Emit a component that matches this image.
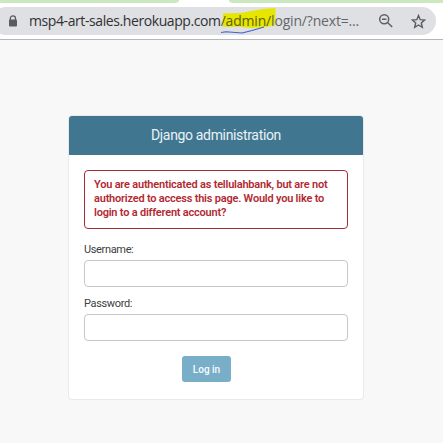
<main class="screen">
  <header class="browser">
    <div class="tabs"><span class="left"></span><span class="right"></span></div>
    <div class="address">
      <svg class="lock" width="10" height="13" viewBox="0 0 10 13">
        <path d="M2.3 5V3.5a2.6 2.6 0 0 1 5.2 0V5" fill="none" stroke="#5a5b5e" stroke-width="1.3" />
        <rect x="1" y="4.6" width="8" height="7" rx="1" fill="#5a5b5e" />
      </svg>
      <div class="url">
        <svg class="marker" width="60" height="32" viewBox="220 6 60 32">
          <path d="M223 13.5 240 13 263 9 275.5 8V25L266 27 251 28 238 26.5 223 27Z" fill="#e6e600" />
          <path d="M221 32.5 226 31.8 242 33 252 30.5 264 27" fill="none" stroke="#3f62c9" stroke-width="1.1" />
        </svg>
        <span class="host">msp4-art-sales.herokuapp.com</span><span class="path"><span class="marked">/admin/</span>login/?next=...</span>
      </div>
      <svg class="zoom" width="16" height="16" viewBox="0 0 16 16" fill="none" stroke="#5f6063" stroke-width="1.5">
        <circle cx="6.2" cy="6.2" r="4.5" />
        <path d="m9.5 9.5 4.7 4.5M4 6.2h4.4" />
      </svg>
      <svg class="star" width="15" height="15" viewBox="0 0 15 15">
        <path d="m7.5 1.6 1.7 4.1 4.4.4-3.3 2.9 1 4.3-3.8-2.3-3.8 2.3 1-4.3L1.4 6.1l4.4-.4Z" fill="none" stroke="#5a5b5e" stroke-width="1.4" />
      </svg>
    </div>
  </header>
  <section class="page">
    <div class="card">
      <h1><span>Django administration</span></h1>
      <form onsubmit={(e) => e.preventDefault()}>
        <p class="error">
          <span>You are authenticated as tellulahbank, but are not</span>
          <span>authorized to access this page. Would you like to</span>
          <span>login to a different account?</span>
        </p>
        <label for="user">Username:</label>
        <input id="user" type="text" />
        <label for="pass">Password:</label>
        <input id="pass" type="password" />
        <button type="submit">Log in</button>
      </form>
    </div>
  </section>
</main>

<style>
  .screen {
    width: 443px;
    height: 443px;
    overflow: hidden;
    display: flex;
    flex-direction: column;
    background: #f8f8f8;
    font-family: Roboto, sans-serif;
  }
  .browser {
    box-sizing: border-box;
    height: 40px;
    flex: none;
    background: #fff;
    border-bottom: 1px solid #b4b5b6;
  }
  .tabs {
    height: 3px;
    display: flex;
    justify-content: space-between;
  }
  .tabs span { background: #cbe8c0; }
  .left { width: 179px; border-bottom-right-radius: 4px 3px; }
  .right { width: 214px; border-bottom-left-radius: 4px 3px; }
  .address {
    box-sizing: border-box;
    display: flex;
    align-items: center;
    height: 28px;
    margin: 4px 7px 0 -8px;
    padding-left: 16px;
    border-radius: 14px;
    background: #dfe0e3;
  }
  .lock { flex: none; }
  .url {
    position: relative;
    flex: none;
    width: 349px;
    padding-left: 11px;
    box-sizing: border-box;
    font: 14px/20px "Open Sans", sans-serif;
    white-space: nowrap;
    color: #66676a;
  }
  .host, .path { position: relative; }
  .host { color: #303134; letter-spacing: -0.41px; }
  .path { letter-spacing: -0.18px; }
  .marked { color: #606010; }
  .marker { position: absolute; left: 202px; top: -5px; }
  .zoom { flex: none; margin-left: 11px; }
  .star { flex: none; margin-left: 17px; }
  .page { flex: 1; padding-top: 75px; }
  .card {
    box-sizing: border-box;
    width: 296px;
    height: 285px;
    margin-left: 68px;
    border: 1px solid #e9e9e9;
    border-radius: 4px;
    background: #fff;
    overflow: hidden;
  }
  h1 {
    margin: 0;
    height: 39px;
    background: #417690;
    color: #e8f2f6;
    font-size: 14px;
    font-weight: 400;
    line-height: 39px;
    letter-spacing: -0.34px;
    text-align: center;
  }
  form {
    display: flex;
    flex-direction: column;
    padding: 15px 15px 0;
  }
  .error {
    box-sizing: border-box;
    height: 59px;
    margin: 0 0 14px;
    padding: 7px 9px;
    border: 1px solid #a52c34;
    border-radius: 4px;
    color: #b22932;
    font-size: 11px;
    line-height: 14px;
    font-weight: 600;
    letter-spacing: -0.21px;
    white-space: nowrap;
  }
  .error span { display: block; }
  label {
    height: 17px;
    color: #404040;
    font-size: 11px;
    line-height: 14px;
    letter-spacing: -0.35px;
  }
  input {
    box-sizing: border-box;
    width: 264px;
    height: 27px;
    margin: 0 0 10px;
    border: 1px solid #c7c7c7;
    border-radius: 4px;
    background: #fff;
    outline: none;
  }
  button {
    align-self: center;
    width: 49px;
    height: 26px;
    margin-top: 5px;
    margin-right: 19px;
    padding: 2px 0 0;
    border: 0;
    border-radius: 3px;
    background: #79aec8;
    color: #f8fcff;
    font: 500 10px/24px Roboto, sans-serif;
  }
</style>
